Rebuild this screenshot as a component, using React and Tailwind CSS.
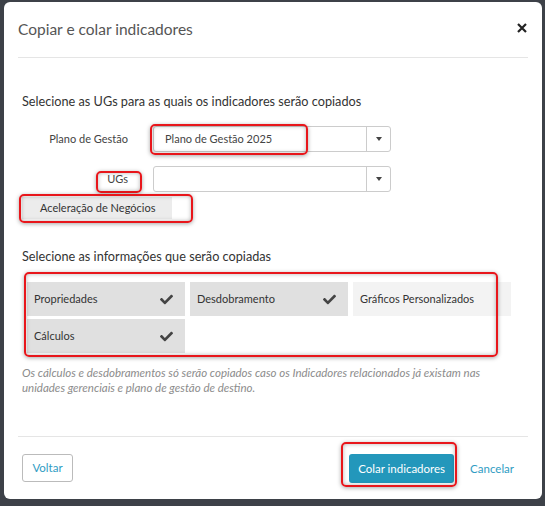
import { FaCheck } from "react-icons/fa";

const mark =
  "pointer-events-none absolute rounded-[5px] border-2 border-[#e8161b] shadow-[0_1px_4px_rgba(0,0,0,0.35),inset_0_0_4px_rgba(0,0,0,0.3)]";

function Select({ value }) {
  return (
    <div className="flex h-[26px] w-[238px] rounded-[3px] border border-[#cccccc] bg-white">
      <div className="flex flex-1 items-center pl-[11px] text-[11px] text-[#444]">{value}</div>
      <div className="flex w-[24px] items-center justify-center border-l border-[#cccccc]">
        <span className="block h-0 w-0 border-x-[3px] border-t-[4px] border-x-transparent border-t-[#444]" />
      </div>
    </div>
  );
}

const options = [
  { label: "Propriedades", on: true },
  { label: "Desdobramento", on: true },
  { label: "Gráficos Personalizados", on: false },
  { label: "Cálculos", on: true },
];

export default function App() {
  return (
    <div className="h-[506px] w-[545px] bg-[#3d4148] pl-[4px] pt-[2px] font-['Lato',sans-serif]">
      <div className="flex h-[497px] w-[538px] flex-col rounded-[6px] bg-white">
        {/* header */}
        <div className="mx-[14px] flex h-[56px] items-center justify-between border-b border-[#e5e5e5]">
          <h4 className="text-[15.5px] text-[#555]">Copiar e colar indicadores</h4>
          <button className="mr-[1px] mt-[-3px] text-[#222]">
            <svg width="10" height="10" viewBox="0 0 10 10">
              <path d="M1 1 L9 9 M9 1 L1 9" stroke="#222" strokeWidth="2.2" />
            </svg>
          </button>
        </div>

        {/* body */}
        <div className="flex flex-col px-[18px] pt-[34px] text-[#333]">
          <p className="text-[12.7px] leading-[18px]">Selecione as UGs para as quais os indicadores serão copiados</p>

          <div className="relative mt-[16px] flex items-center gap-[25px]">
            <label className="w-[106px] text-right text-[11px] text-[#444]">Plano de Gestão</label>
            <Select value="Plano de Gestão 2025" />
            <div className={mark + " left-[128px] top-[-2px] h-[31px] w-[158px]"} />
          </div>

          <div className="relative mt-[14px] flex items-center gap-[25px]">
            <label className="w-[106px] text-right text-[11px] text-[#444]">UGs</label>
            <Select value="" />
            <div className={mark + " left-[74px] top-[5px] h-[22px] w-[46px]"} />
          </div>

          <div className="relative mt-[5px] w-[174px]">
            <div className="flex h-[22px] w-[150px] items-center pl-[18px] text-[11px] text-[#333] bg-[#ececec]">
              Aceleração de Negócios
            </div>
            <div className={mark + " left-[-3px] top-[-3px] h-[29px] w-[174px]"} />
          </div>

          <p className="mt-[28px] text-[12.7px] leading-[18px]">Selecione as informações que serão copiadas</p>

          <div className="relative mt-[7px] pb-[4px] pl-[5px] pt-[10px]">
            <div className="grid grid-cols-[158px_158px_158px] gap-x-[5px] gap-y-[3px]">
              {options.map((o) => (
                <div
                  key={o.label}
                  className={
                    "flex h-[34px] items-center justify-between pl-[7px] pr-[12px] text-[11px] text-[#333] " +
                    (o.on ? "bg-[#e0e0e0]" : "bg-[#f3f3f3]")
                  }
                >
                  <span>{o.label}</span>
                  {o.on && <FaCheck className="text-[13px] text-[#444]" />}
                </div>
              ))}
            </div>
            <div className={mark + " left-[2px] top-0 h-[85px] w-[474px]"} />
          </div>

          <p className="mt-[8px] text-[11.5px] italic leading-[15px] text-[#8c8c8c]">
            Os cálculos e desdobramentos só serão copiados caso os Indicadores relacionados já existam nas
            <br />
            unidades gerenciais e plano de gestão de destino.
          </p>
        </div>

        {/* footer */}
        <div className="mx-[14px] mt-auto flex h-[63px] items-start border-t border-[#e5e5e5] pl-[4px] pr-[14px] pt-[17px]">
          <button className="h-[28px] w-[51px] rounded-[3px] border border-[#bbbbbb] text-[11.5px] text-[#2f9cc3]">
            Voltar
          </button>
          <div className="ml-auto flex items-center gap-[16px]">
            <div className="relative">
              <button className="h-[29px] w-[105px] rounded-[3px] bg-[#2397bb] text-[11.5px] text-white">
                Colar indicadores
              </button>
              <div className={mark + " left-[-8px] top-[-12px] h-[45px] w-[116px]"} />
            </div>
            <button className="text-[11.5px] text-[#2f9cc3]">Cancelar</button>
          </div>
        </div>
      </div>
    </div>
  );
}
